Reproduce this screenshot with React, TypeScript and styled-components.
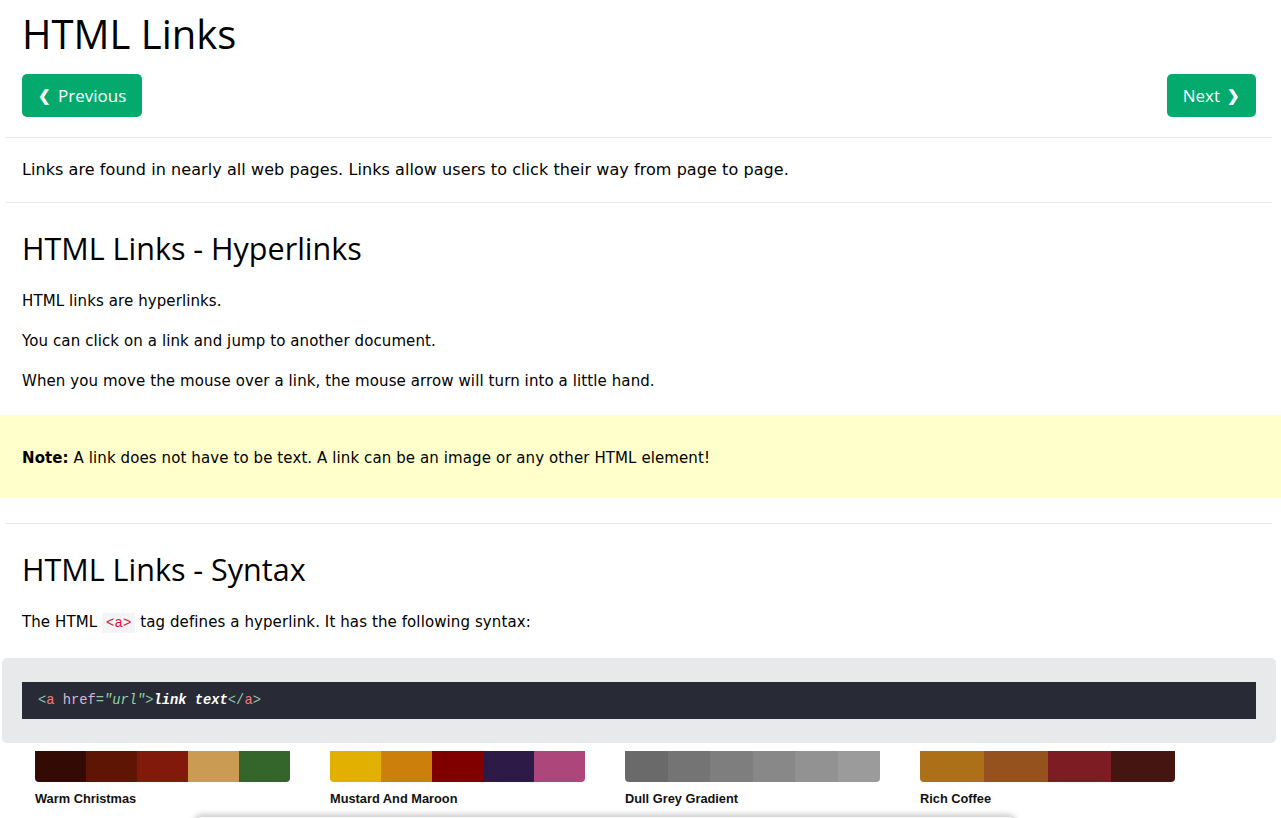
import React from 'react';
import styled, { createGlobalStyle } from 'styled-components';

const GlobalStyle = createGlobalStyle`
  body {
    margin: 0;
    background: #fff;
    color: #000;
    font-family: "DejaVu Sans", Verdana, sans-serif;
    font-size: 15px;
    letter-spacing: 0.1px;
    line-height: 25px;
    overflow: hidden;
  }
`;

const Page = styled.div`
  padding: 0 25px 0 22px;
`;

const Title = styled.h1`
  font-family: "Open Sans", "Segoe UI", sans-serif;
  font-weight: 400;
  font-size: 40px;
  line-height: 48px;
  letter-spacing: 0;
  margin: 10px 0 16px;
`;

const NavBar = styled.div`
  display: flex;
  justify-content: space-between;
`;

const NavButton = styled.a`
  display: inline-flex;
  align-items: center;
  gap: 7px;
  height: 43px;
  padding: 0 16px;
  box-sizing: border-box;
  background: #04aa6d;
  color: #fff;
  border-radius: 5px;
  font-family: "Open Sans", "Segoe UI", sans-serif;
  font-size: 17px;
  letter-spacing: 0;
  text-decoration: none;
`;

const Chevron = styled.span`
  font-size: 15px;
  font-weight: 700;
`;

const Rule = styled.hr`
  border: 0;
  border-top: 1px solid #e7e9eb;
  margin: 20px -16px;
`;

const Text = styled.p<{ $intro?: boolean }>`
  margin: 15px 0;
  font-size: ${p => (p.$intro ? '16px' : '15px')};
  letter-spacing: ${p => (p.$intro ? '0.07px' : '0.1px')};
  line-height: ${p => (p.$intro ? '24px' : '25px')};
`;

const Heading = styled.h2`
  font-family: "Open Sans", "Segoe UI", sans-serif;
  font-weight: 400;
  font-size: 30.5px;
  line-height: 36px;
  letter-spacing: 0;
  margin: 27px 0 23px;
`;

const Note = styled.div`
  background: #ffffcc;
  margin: 21px -25px 25px -22px;
  padding: 31px 25px 27px 22px;
  p {
    margin: 0;
    line-height: 25px;
  }
`;

const InlineCode = styled.code`
  font-family: "Liberation Mono", Consolas, monospace;
  font-size: 14px;
  line-height: 1;
  letter-spacing: 0;
  color: crimson;
  background: #f3f4f6;
  padding: 2px 4px;
`;

const Example = styled.div`
  background: #e7e9eb;
  border-radius: 5px;
  margin: 23px -20px 0 -20px;
  padding: 24px 20px;
`;

const CodeBlock = styled.div`
  background: #282a35;
  padding: 8px 16px;
  font-family: "Liberation Mono", Consolas, monospace;
  font-size: 13.75px;
  letter-spacing: 0;
  line-height: 21px;
  color: #fff;
  white-space: pre;
`;

const Tok = styled.span<{ $c: string; $i?: boolean; $b?: boolean }>`
  color: ${p => p.$c};
  font-style: ${p => (p.$i ? 'italic' : 'normal')};
  font-weight: ${p => (p.$b ? 700 : 400)};
`;

const Palettes = styled.div`
  display: flex;
  gap: 40px;
  margin: 8px 0 0 13px;
`;

const Palette = styled.div`
  width: 255px;
`;

const Strip = styled.div`
  display: flex;
  height: 31px;
  border-radius: 0 0 4px 4px;
  overflow: hidden;
`;

const Swatch = styled.div<{ $bg: string }>`
  flex: 1;
  background: ${p => p.$bg};
`;

const PaletteName = styled.div`
  font-family: "Liberation Sans", Arial, sans-serif;
  font-weight: 700;
  font-size: 12.8px;
  letter-spacing: 0;
  line-height: 16px;
  color: #111;
  margin-top: 9px;
`;

const Floating = styled.div`
  margin: 10px 0 0 173px;
  width: 820px;
  height: 60px;
  background: #fff;
  border-radius: 6px;
  box-shadow: 0 -2px 6px rgba(0, 0, 0, 0.25);
`;

const palettes = [
  { name: 'Warm Christmas', colors: ['#340a04', '#5e1504', '#821a0c', '#c99b53', '#34662c'] },
  { name: 'Mustard And Maroon', colors: ['#e2b000', '#cd7f0b', '#800000', '#2e1a47', '#ad467a'] },
  { name: 'Dull Grey Gradient', colors: ['#6a6a6a', '#747474', '#7e7e7e', '#888888', '#929292', '#9b9b9b'] },
  { name: 'Rich Coffee', colors: ['#ac7118', '#95521e', '#7e1c23', '#451511'] },
];

export default function App() {
  return (
    <>
      <GlobalStyle />
      <Page>
        <Title>HTML Links</Title>
        <NavBar>
          <NavButton href="#"><Chevron>❮</Chevron>Previous</NavButton>
          <NavButton href="#">Next<Chevron>❯</Chevron></NavButton>
        </NavBar>
        <Rule />
        <Text $intro>Links are found in nearly all web pages. Links allow users to click their way from page to page.</Text>
        <Rule />
        <Heading>HTML Links - Hyperlinks</Heading>
        <Text>HTML links are hyperlinks.</Text>
        <Text>You can click on a link and jump to another document.</Text>
        <Text>When you move the mouse over a link, the mouse arrow will turn into a little hand.</Text>
        <Note>
          <p><strong>Note:</strong> A link does not have to be text. A link can be an image or any other HTML element!</p>
        </Note>
        <Rule />
        <Heading>HTML Links - Syntax</Heading>
        <Text>The HTML <InlineCode>&lt;a&gt;</InlineCode> tag defines a hyperlink. It has the following syntax:</Text>
        <Example>
          <CodeBlock>
            <Tok $c="#8fc7a9">&lt;</Tok>
            <Tok $c="#f07c7c">a</Tok>
            <Tok $c="#d7b4d8"> href</Tok>
            <Tok $c="#8fc7a9">=</Tok>
            <Tok $c="#95d5a6" $i>"url"</Tok>
            <Tok $c="#8fc7a9">&gt;</Tok>
            <Tok $c="#ffffff" $i $b>link text</Tok>
            <Tok $c="#8fc7a9">&lt;/</Tok>
            <Tok $c="#f07c7c">a</Tok>
            <Tok $c="#8fc7a9">&gt;</Tok>
          </CodeBlock>
        </Example>
        <Palettes>
          {palettes.map(p => (
            <Palette key={p.name}>
              <Strip>
                {p.colors.map(c => <Swatch key={c} $bg={c} />)}
              </Strip>
              <PaletteName>{p.name}</PaletteName>
            </Palette>
          ))}
        </Palettes>
        <Floating />
      </Page>
    </>
  );
}
